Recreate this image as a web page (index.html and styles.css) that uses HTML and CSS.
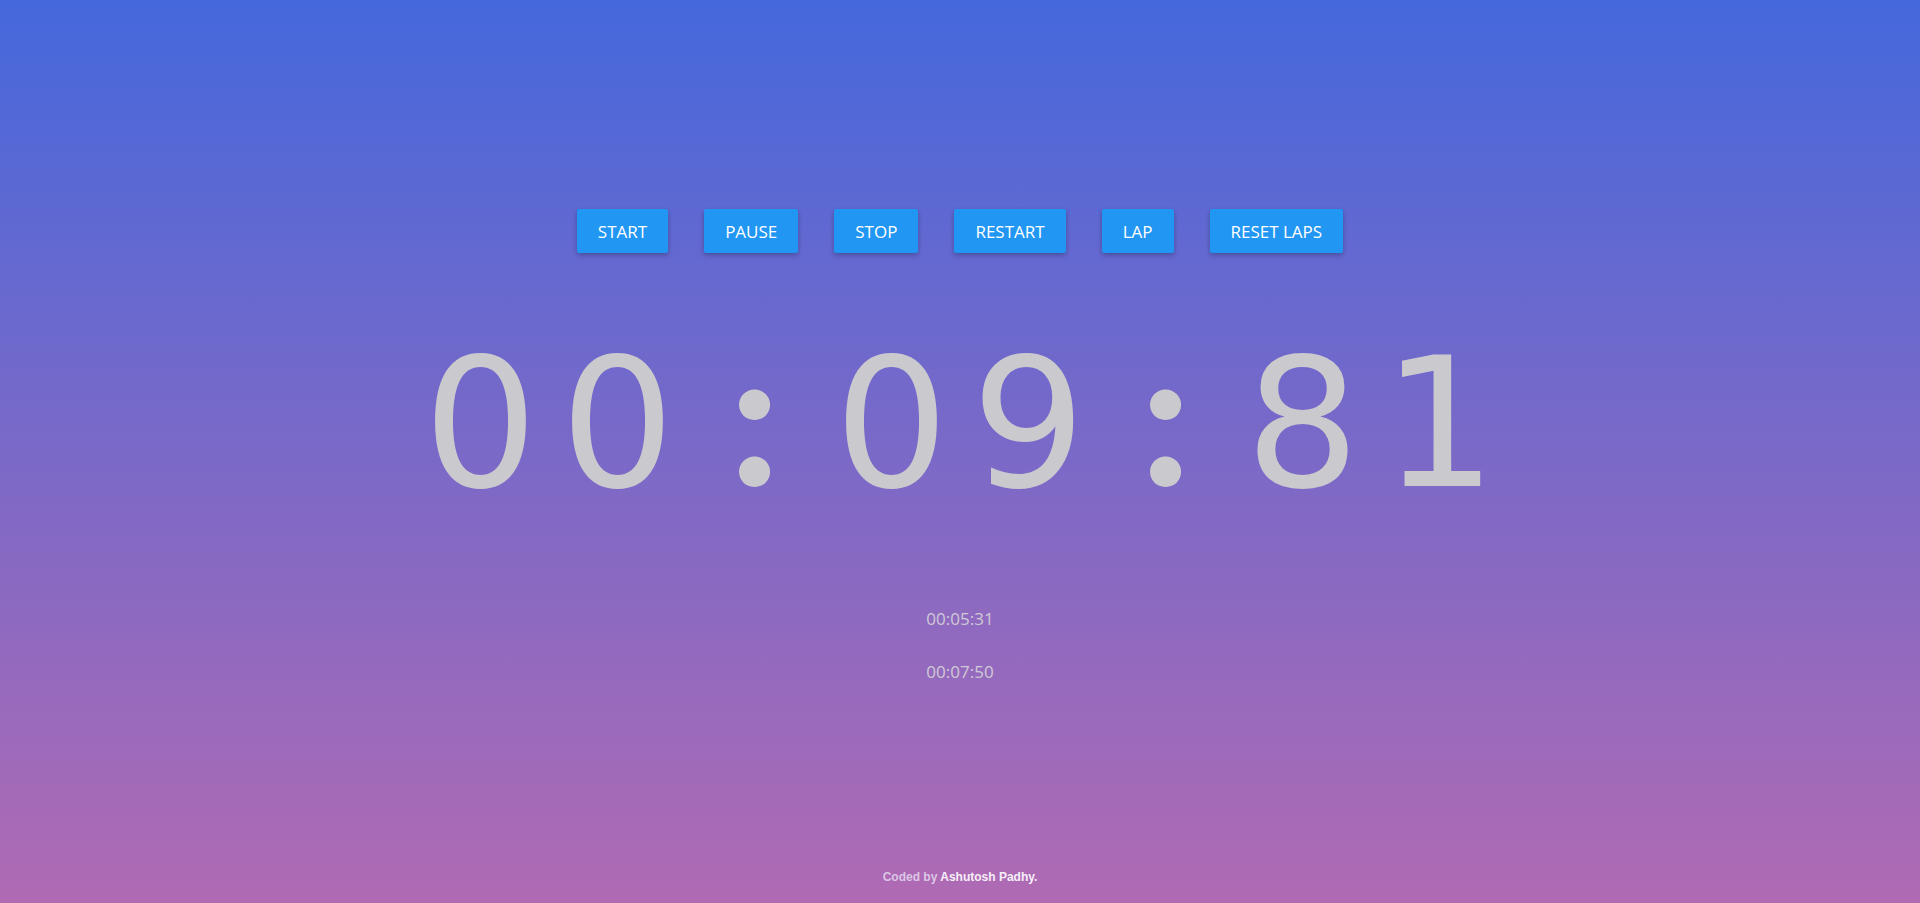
FILE: index.html
```html
<!DOCTYPE html>
<html lang="en">
<head>
<meta charset="utf-8">
<title>Stopwatch</title>
<link rel="stylesheet" href="styles.css">
</head>
<body>
<main class="page">
  <div class="controls">
    <button class="btn">START</button>
    <button class="btn">PAUSE</button>
    <button class="btn">STOP</button>
    <button class="btn">RESTART</button>
    <button class="btn">LAP</button>
    <button class="btn">RESET LAPS</button>
  </div>
  <div class="timer"><span class="cell">0</span><span class="cell">0</span><span class="cell sep">:</span><span class="cell">0</span><span class="cell">9</span><span class="cell sep">:</span><span class="cell">8</span><span class="cell">1</span></div>
  <ul class="laps">
    <li class="lap">00:05:31</li>
    <li class="lap">00:07:50</li>
  </ul>
  <footer class="footer">Coded by <span class="author">Ashutosh Padhy.</span></footer>
</main>
</body>
</html>
```
FILE: styles.css
```css
html, body {
  margin: 0;
  padding: 0;
  height: 100%;
}
body {
  background: linear-gradient(to bottom, #4568dc, #b06ab3);
  font-family: "Open Sans", "Noto Sans", sans-serif;
  overflow: hidden;
}
.page {
  height: 903px;
  display: flex;
  flex-direction: column;
  align-items: center;
}
.controls {
  display: flex;
  gap: 36px;
  margin-top: 209px;
}
.btn {
  height: 44px;
  padding: 0 21px;
  border: none;
  border-radius: 2px;
  background: #2196f3;
  color: #fff;
  font-family: "Open Sans", sans-serif;
  font-size: 17px;
  box-shadow: 0 2px 5px rgba(0, 0, 0, 0.28);
  cursor: pointer;
}
.timer {
  display: flex;
  align-items: baseline;
  margin-top: 69px;
  height: 180px;
  font-family: "DejaVu Sans", sans-serif;
  font-size: 180px;
  line-height: 180px;
  color: #cacace;
}
.cell {
  width: 137px;
  text-align: center;
}
.sep {
  font-family: "Lato", sans-serif;
  font-weight: 900;
  font-size: 190px;
}
.laps {
  list-style: none;
  margin: 104px 0 0;
  padding: 0;
  display: flex;
  flex-direction: column;
  gap: 28px;
  align-items: center;
}
.lap {
  font-size: 17px;
  line-height: 25px;
  color: #cfcad6;
}
.footer {
  margin-top: auto;
  margin-bottom: 19px;
  font-family: "Liberation Sans", Arial, sans-serif;
  font-weight: bold;
  font-size: 12px;
  color: #dcc6e6;
}
.author {
  color: #f6eef8;
}
```
